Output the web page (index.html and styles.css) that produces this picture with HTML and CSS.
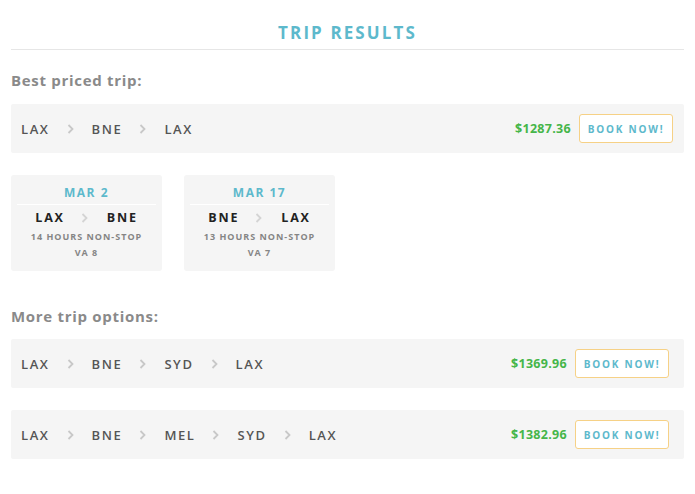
FILE: index.html
```html
<!DOCTYPE html>
<html>
<head>
<meta charset="utf-8">
<link rel="stylesheet" href="styles.css">
</head>
<body>
<div class="page">
  <h1 class="title">TRIP RESULTS</h1>
  <h2 class="section">Best priced trip:</h2>
  <div class="trip trip-best">
    <div class="route">
      <span class="code">LAX</span><span class="chev"><svg width="7" height="10" viewBox="0 0 7 10"><polyline points="1.5,1 5.5,5 1.5,9" fill="none" stroke="#c8c8c8" stroke-width="1.8"/></svg></span>
      <span class="code">BNE</span><span class="chev"><svg width="7" height="10" viewBox="0 0 7 10"><polyline points="1.5,1 5.5,5 1.5,9" fill="none" stroke="#c8c8c8" stroke-width="1.8"/></svg></span>
      <span class="code">LAX</span>
    </div>
    <div class="buy">
      <span class="price">$1287.36</span>
      <button class="book">BOOK NOW!</button>
    </div>
  </div>
  <div class="legs">
    <div class="leg">
      <div class="date">MAR 2</div>
      <div class="leg-route"><span>LAX</span><span class="chev"><svg width="7" height="10" viewBox="0 0 7 10"><polyline points="1.5,1 5.5,5 1.5,9" fill="none" stroke="#d4d4d4" stroke-width="1.8"/></svg></span><span>BNE</span></div>
      <div class="info">14 HOURS NON-STOP</div>
      <div class="info">VA 8</div>
    </div>
    <div class="leg">
      <div class="date">MAR 17</div>
      <div class="leg-route"><span>BNE</span><span class="chev"><svg width="7" height="10" viewBox="0 0 7 10"><polyline points="1.5,1 5.5,5 1.5,9" fill="none" stroke="#d4d4d4" stroke-width="1.8"/></svg></span><span>LAX</span></div>
      <div class="info">13 HOURS NON-STOP</div>
      <div class="info">VA 7</div>
    </div>
  </div>
  <h2 class="section section-more">More trip options:</h2>
  <div class="trip">
    <div class="route">
      <span class="code">LAX</span><span class="chev"><svg width="7" height="10" viewBox="0 0 7 10"><polyline points="1.5,1 5.5,5 1.5,9" fill="none" stroke="#c8c8c8" stroke-width="1.8"/></svg></span>
      <span class="code">BNE</span><span class="chev"><svg width="7" height="10" viewBox="0 0 7 10"><polyline points="1.5,1 5.5,5 1.5,9" fill="none" stroke="#c8c8c8" stroke-width="1.8"/></svg></span>
      <span class="code">SYD</span><span class="chev"><svg width="7" height="10" viewBox="0 0 7 10"><polyline points="1.5,1 5.5,5 1.5,9" fill="none" stroke="#c8c8c8" stroke-width="1.8"/></svg></span>
      <span class="code">LAX</span>
    </div>
    <div class="buy">
      <span class="price">$1369.96</span>
      <button class="book">BOOK NOW!</button>
    </div>
  </div>
  <div class="trip">
    <div class="route">
      <span class="code">LAX</span><span class="chev"><svg width="7" height="10" viewBox="0 0 7 10"><polyline points="1.5,1 5.5,5 1.5,9" fill="none" stroke="#c8c8c8" stroke-width="1.8"/></svg></span>
      <span class="code">BNE</span><span class="chev"><svg width="7" height="10" viewBox="0 0 7 10"><polyline points="1.5,1 5.5,5 1.5,9" fill="none" stroke="#c8c8c8" stroke-width="1.8"/></svg></span>
      <span class="code">MEL</span><span class="chev"><svg width="7" height="10" viewBox="0 0 7 10"><polyline points="1.5,1 5.5,5 1.5,9" fill="none" stroke="#c8c8c8" stroke-width="1.8"/></svg></span>
      <span class="code">SYD</span><span class="chev"><svg width="7" height="10" viewBox="0 0 7 10"><polyline points="1.5,1 5.5,5 1.5,9" fill="none" stroke="#c8c8c8" stroke-width="1.8"/></svg></span>
      <span class="code">LAX</span>
    </div>
    <div class="buy">
      <span class="price">$1382.96</span>
      <button class="book">BOOK NOW!</button>
    </div>
  </div>
</div>
</body>
</html>
```
FILE: styles.css
```css
html, body {
  margin: 0;
  padding: 0;
  background: #ffffff;
}
body {
  font-family: "Open Sans", "Liberation Sans", sans-serif;
}
.page {
  padding: 0 11px;
}
.title {
  margin: 0;
  padding-top: 22px;
  padding-bottom: 5px;
  text-align: center;
  font-size: 17px;
  font-weight: 700;
  letter-spacing: 2.1px;
  color: #5db9cc;
  line-height: 22px;
  border-bottom: 1px solid #e6e6e6;
}
.section {
  margin: 20px 0 14px;
  font-size: 15px;
  font-weight: 700;
  color: #8a8a8a;
  line-height: 20px;
  letter-spacing: 0.7px;
}
.section-more {
  margin-top: 35px;
  margin-bottom: 13px;
}
.trip {
  display: flex;
  align-items: center;
  justify-content: space-between;
  background: #f5f5f5;
  height: 49px;
  padding: 0 15px 0 10px;
  border-radius: 2px;
  margin-bottom: 22px;
}
.trip-best {
  padding-right: 11px;
}
.route {
  display: flex;
  align-items: center;
}
.code {
  font-size: 13px;
  font-weight: 600;
  letter-spacing: 1.6px;
  color: #555555;
}
.chev {
  display: inline-flex;
  align-items: center;
  margin: 0 18px 0 17px;
}
.buy {
  display: flex;
  align-items: center;
  gap: 8px;
}
.price {
  font-size: 12.5px;
  font-weight: 700;
  color: #45b649;
  letter-spacing: 0.3px;
}
.book {
  font-family: "Open Sans", "Liberation Sans", sans-serif;
  background: #ffffff;
  border: 1px solid #f6d186;
  border-radius: 3px;
  height: 29px;
  width: 94px;
  padding: 0;
  font-size: 10px;
  font-weight: 700;
  letter-spacing: 1.8px;
  color: #5db9cc;
}
.legs {
  display: flex;
  gap: 22px;
}
.leg {
  width: 139px;
  height: 88px;
  background: #f5f5f5;
  border-radius: 3px;
  padding: 4px 6px;
  text-align: center;
}
.date {
  font-size: 12px;
  font-weight: 700;
  letter-spacing: 1.5px;
  color: #5db9cc;
  line-height: 16px;
  padding: 6px 0 3px;
  border-bottom: 1px solid #ffffff;
}
.leg-route {
  display: flex;
  justify-content: center;
  align-items: center;
  font-size: 12.5px;
  font-weight: 700;
  letter-spacing: 1.8px;
  color: #222222;
  line-height: 18px;
  padding-top: 4px;
  margin-bottom: 2px;
}
.leg-route .chev {
  margin: 0 19px 0 16px;
}
.info {
  font-size: 9px;
  font-weight: 700;
  letter-spacing: 1px;
  color: #858585;
  line-height: 16px;
}
```
